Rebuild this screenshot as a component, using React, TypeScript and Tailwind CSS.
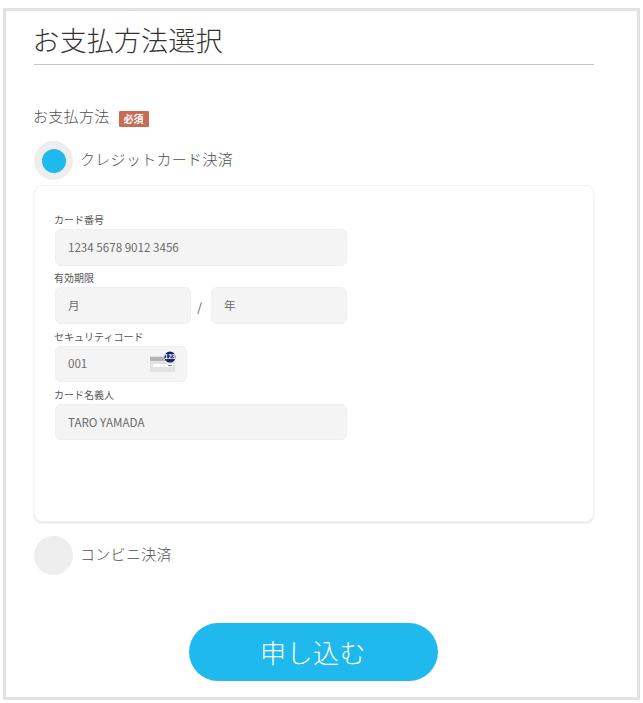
const font = { fontFamily: '"Noto Sans CJK JP", "Noto Sans", sans-serif' };

function CardIcon() {
  return (
    <svg width="27" height="22" viewBox="0 0 27 22" className="absolute left-[94px] top-[4px]">
      <rect x="0" y="5" width="25" height="16" fill="#e2e2e2" />
      <rect x="0" y="6" width="25" height="4" fill="#b4b4b4" />
      <rect x="3" y="13" width="20" height="3" fill="#ffffff" />
      <rect x="18" y="14" width="4" height="1" fill="#888888" />
      <circle cx="20" cy="6" r="5.5" fill="#1a1f6e" />
      <text x="20" y="8.2" textAnchor="middle" fontSize="6.5" fontWeight="700" fill="#ffffff" fontFamily="Liberation Sans, sans-serif">123</text>
    </svg>
  );
}

function Field({ label, value, width }: { label: string; value: string; width: string }) {
  return (
    <div>
      <div className="text-[10px] leading-[14px] text-[#555555] h-[16px] -ml-px">{label}</div>
      <div className={`h-[36.5px] ${width} rounded-md border border-[#efefef] bg-[#f4f4f4] pl-[12px] flex items-center text-[11.6px] text-[#6b6b6b]`}>{value}</div>
    </div>
  );
}

export default function App() {
  return (
    <div className="w-[643px] h-[703px] bg-white overflow-hidden pt-[8px] pl-[3px]" style={font}>
      <div className="w-[637px] h-[692px] border-[3px] border-[#e2e2e2] pl-[28px] pr-[43px]">
        <div className="h-[54px] border-b border-[#c4c4c4] w-[560px] flex items-center pt-[3px]">
          <h1 className="text-[27px] font-light leading-none text-[#333333] tracking-[0.15px] -ml-[1.5px]">お支払方法選択</h1>
        </div>
        <div className="mt-[42px] h-[18px] flex items-center gap-[9px]">
          <span className="text-[15px] text-[#4f4f4f] font-light tracking-[0.3px] -ml-px">お支払方法</span>
          <span className="mt-[5px] w-[30px] h-[16px] bg-[#c96a56] rounded-[1px] flex items-center justify-center text-[10px] font-bold text-white">必須</span>
        </div>
        <div className="mt-[16px] flex items-center gap-[7px] h-[39px]">
          <div className="w-[39px] h-[39px] rounded-full bg-[#eeeeee] flex items-center justify-center">
            <div className="w-[24px] h-[24px] rounded-full bg-[#1fb9ee]" />
          </div>
          <span className="text-[15px] text-[#4f4f4f] font-light tracking-[0.3px] pb-[2px]">クレジットカード決済</span>
        </div>
        <div className="mt-[5px] w-[560px] h-[337px] rounded-lg bg-white border border-[#f4f4f4] shadow-[0_1px_2px_rgba(0,0,0,0.12)] pl-[20px] pt-[27px]">
          <div className="flex flex-col gap-[5.83px]">
            <Field label="カード番号" value="1234 5678 9012 3456" width="w-[292px]" />
            <div>
              <div className="text-[10px] leading-[14px] text-[#555555] h-[16px] -ml-px">有効期限</div>
              <div className="flex items-center">
                <div className="h-[36.5px] w-[136px] rounded-md border border-[#efefef] bg-[#f4f4f4] pl-[12px] flex items-center text-[11.6px] text-[#6b6b6b]">月</div>
                <span className="w-[20px] pr-[3px] pt-[2px] text-center text-[12px] text-[#555555]">/</span>
                <div className="h-[36.5px] w-[136px] rounded-md border border-[#efefef] bg-[#f4f4f4] pl-[12px] flex items-center text-[11.6px] text-[#6b6b6b]">年</div>
              </div>
            </div>
            <div>
              <div className="text-[10px] leading-[14px] text-[#555555] h-[16px] -ml-px">セキュリティコード</div>
              <div className="relative h-[36.5px] w-[132px] rounded-md border border-[#efefef] bg-[#f4f4f4] pl-[12px] flex items-center text-[11.6px] text-[#6b6b6b]">
                001
                <CardIcon />
              </div>
            </div>
            <Field label="カード名義人" value="TARO YAMADA" width="w-[292px]" />
          </div>
        </div>
        <div className="mt-[14px] flex items-center gap-[7px] h-[39px]">
          <div className="w-[39px] h-[39px] rounded-full bg-[#eeeeee]" />
          <span className="text-[15px] text-[#4f4f4f] font-light tracking-[0.3px] pb-[2px]">コンビニ決済</span>
        </div>
        <div className="mt-[48px] w-[560px] flex justify-center pr-[2px]">
          <button className="w-[249px] h-[58px] rounded-full bg-[#1fb9ee] text-white text-[26px] font-light leading-none tracking-[0.5px]">申し込む</button>
        </div>
      </div>
    </div>
  );
}
